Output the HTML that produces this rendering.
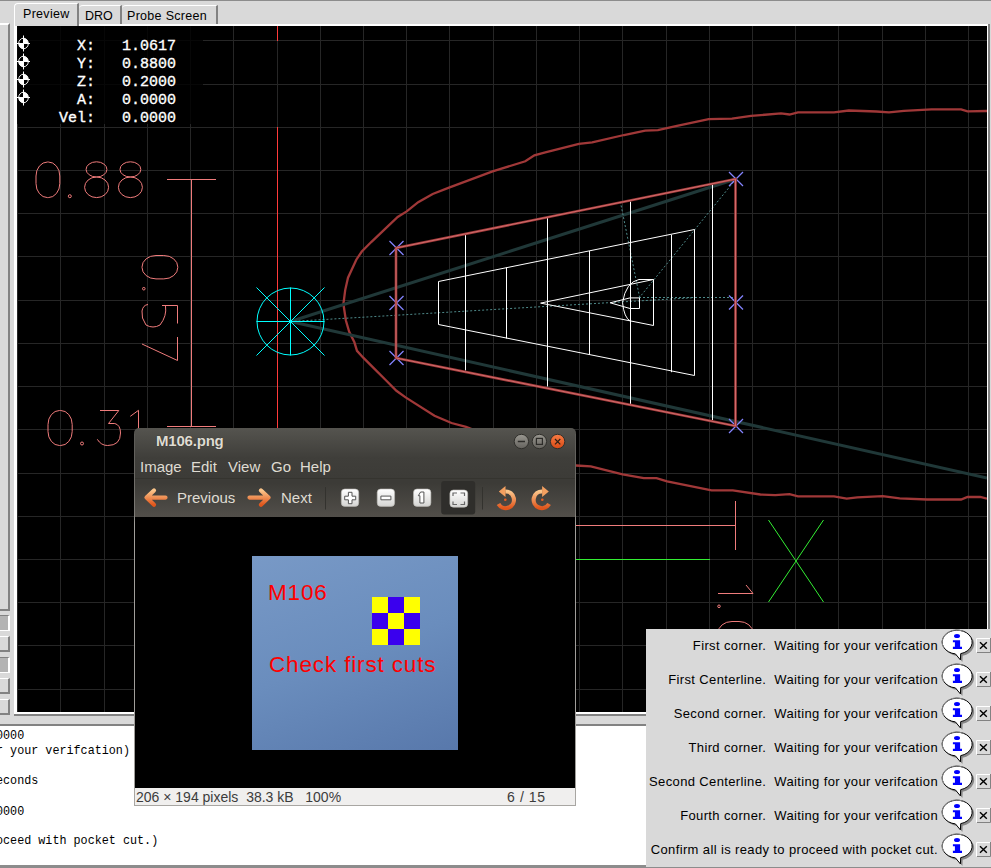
<!DOCTYPE html>
<html><head><meta charset="utf-8">
<style>
*{margin:0;padding:0;box-sizing:border-box}
html,body{width:991px;height:868px;overflow:hidden;background:#d9d9d9;font-family:"Liberation Sans",sans-serif}
.abs{position:absolute}
#topline{left:0;top:0;width:991px;height:1px;background:#8c8c8c}
/* left panel */
#lpanel{left:0;top:23px;width:10px;height:588px;border-top:2px solid #fff;border-right:2px solid #828282;border-bottom:2px solid #828282}
.lbtn{left:0;width:10px;height:16px;background:#d9d9d9;border-top:1px solid #fff;border-right:2px solid #828282;border-bottom:2px solid #828282}
.lbtn.sunk{background:#b3b3b3;border-top:1px solid #828282;border-right:2px solid #fff;border-bottom:1px solid #fff}
/* tabs */
.tab{top:5px;height:20px;background:#d9d9d9;border-left:1px solid #fff;border-top:1px solid #fff;border-right:2px solid #828282;border-top-left-radius:4px;font-size:12.5px;color:#000;padding-left:6px;line-height:21px}
#tab1{left:14px;top:3px;width:65px;height:23px;line-height:21px;padding-left:8px;letter-spacing:0.3px;z-index:2}
#tab2{left:79px;width:43px;padding-left:6px;border-left:none}
#tab3{left:122px;width:96px;padding-left:5px;border-left:none;letter-spacing:0.3px}
/* preview frame */
#frame{left:14px;top:24px;width:976px;height:692px;background:#fff;border-bottom:2px solid #828282;border-right:2px solid #828282}
#black{left:17px;top:26px;width:970px;height:686px;background:#000;overflow:hidden}
#draw{left:0;top:0}
/* dro */
#dro{left:0;top:0;width:186px;height:98px;background:rgba(0,0,0,0.8)}
.dro{font-family:"Liberation Mono",monospace;font-size:15px;-webkit-text-stroke:0.35px #fff;color:#fff;white-space:pre;line-height:18.2px}
/* bottom */
#band{left:0;top:724px;width:991px;height:2px;background:#828282}
#text{left:0;top:726px;width:991px;height:139px;background:#fff}
#bottomline{left:0;top:865px;width:991px;height:3px;background:#8c8c8c}
.mono{font-family:"Liberation Mono",monospace;font-size:11.75px;color:#000;white-space:pre;line-height:15px}
/* eog window */
#eog{left:134px;top:428px;width:442px;height:378px;overflow:hidden;border-radius:5px 5px 0 0}
#eoghead{left:0;top:0;width:442px;height:89px;background:linear-gradient(#55544f 0px,#3f3e3a 30px,#3c3b37 50px,#3c3b37 55px,#524f4a 89px)}
#eogtitle{left:22px;top:4px;font-weight:bold;font-size:15px;letter-spacing:-0.2px;color:#dfdbd2;text-shadow:0 0 1px #26251f}
.menu{top:30px;font-size:15px;color:#dfdbd2}
#eogbody{left:0;top:89px;width:442px;height:271px;background:#000}
#img{left:118px;top:128px;width:206px;height:194px;background:linear-gradient(160deg,#7899c6 0%,#6a8dbd 50%,#5878ab 100%)}
.imgtxt{font-size:22.5px;letter-spacing:0.85px;color:#ff0000;white-space:pre;line-height:26px}
#status{left:0;top:360px;width:442px;height:18px;background:#f0efee;border-left:1px solid #a8a6a2;border-right:1px solid #a8a6a2;border-bottom:1px solid #a8a6a2;font-size:14px;color:#3c3c3c;line-height:17px}
/* notif */
#notif{left:646px;top:629px;width:345px;height:238px;background:#d9d9d9}
.nrow{left:0;width:292px;text-align:right;font-size:13px;letter-spacing:0.37px;color:#000;white-space:pre}
.bubble{left:296px;width:32px;height:34px}
.xbtn{left:330px;width:16px;height:15px;background:#d9d9d9;border-top:1px solid #fff;border-left:1px solid #fff;border-right:1px solid #828282;border-bottom:1px solid #828282;font-size:13px;line-height:12px;text-align:center;color:#000}
</style></head><body>
<div id="topline" class="abs"></div>
<div id="lpanel" class="abs"></div>
<div class="abs lbtn sunk" style="top:615px"></div>
<div class="abs lbtn" style="top:636px"></div>
<div class="abs lbtn sunk" style="top:657px"></div>
<div class="abs lbtn" style="top:678px"></div>
<div class="abs lbtn" style="top:699px"></div>

<div id="tab2" class="abs tab">DRO</div>
<div id="tab3" class="abs tab">Probe Screen</div>
<div id="frame" class="abs"></div>
<div id="tab1" class="abs tab">Preview</div>
<div id="black" class="abs">
<svg id="draw" class="abs" width="970" height="686" viewBox="17 26 970 686">
<line x1="17.5" y1="26" x2="17.5" y2="712" stroke="#262626" stroke-width="1" />
<line x1="60.5" y1="26" x2="60.5" y2="712" stroke="#262626" stroke-width="1" />
<line x1="104.5" y1="26" x2="104.5" y2="712" stroke="#262626" stroke-width="1" />
<line x1="147.5" y1="26" x2="147.5" y2="712" stroke="#262626" stroke-width="1" />
<line x1="190.5" y1="26" x2="190.5" y2="712" stroke="#262626" stroke-width="1" />
<line x1="233.5" y1="26" x2="233.5" y2="712" stroke="#262626" stroke-width="1" />
<line x1="277.5" y1="26" x2="277.5" y2="712" stroke="#262626" stroke-width="1" />
<line x1="320.5" y1="26" x2="320.5" y2="712" stroke="#262626" stroke-width="1" />
<line x1="363.5" y1="26" x2="363.5" y2="712" stroke="#262626" stroke-width="1" />
<line x1="406.5" y1="26" x2="406.5" y2="712" stroke="#262626" stroke-width="1" />
<line x1="449.5" y1="26" x2="449.5" y2="712" stroke="#262626" stroke-width="1" />
<line x1="493.5" y1="26" x2="493.5" y2="712" stroke="#262626" stroke-width="1" />
<line x1="536.5" y1="26" x2="536.5" y2="712" stroke="#262626" stroke-width="1" />
<line x1="579.5" y1="26" x2="579.5" y2="712" stroke="#262626" stroke-width="1" />
<line x1="622.5" y1="26" x2="622.5" y2="712" stroke="#262626" stroke-width="1" />
<line x1="666.5" y1="26" x2="666.5" y2="712" stroke="#262626" stroke-width="1" />
<line x1="709.5" y1="26" x2="709.5" y2="712" stroke="#262626" stroke-width="1" />
<line x1="752.5" y1="26" x2="752.5" y2="712" stroke="#262626" stroke-width="1" />
<line x1="795.5" y1="26" x2="795.5" y2="712" stroke="#262626" stroke-width="1" />
<line x1="838.5" y1="26" x2="838.5" y2="712" stroke="#262626" stroke-width="1" />
<line x1="882.5" y1="26" x2="882.5" y2="712" stroke="#262626" stroke-width="1" />
<line x1="925.5" y1="26" x2="925.5" y2="712" stroke="#262626" stroke-width="1" />
<line x1="968.5" y1="26" x2="968.5" y2="712" stroke="#262626" stroke-width="1" />
<line x1="17" y1="40.5" x2="987" y2="40.5" stroke="#262626" stroke-width="1" />
<line x1="17" y1="84.5" x2="987" y2="84.5" stroke="#262626" stroke-width="1" />
<line x1="17" y1="127.5" x2="987" y2="127.5" stroke="#262626" stroke-width="1" />
<line x1="17" y1="170.5" x2="987" y2="170.5" stroke="#262626" stroke-width="1" />
<line x1="17" y1="213.5" x2="987" y2="213.5" stroke="#262626" stroke-width="1" />
<line x1="17" y1="256.5" x2="987" y2="256.5" stroke="#262626" stroke-width="1" />
<line x1="17" y1="300.5" x2="987" y2="300.5" stroke="#262626" stroke-width="1" />
<line x1="17" y1="343.5" x2="987" y2="343.5" stroke="#262626" stroke-width="1" />
<line x1="17" y1="386.5" x2="987" y2="386.5" stroke="#262626" stroke-width="1" />
<line x1="17" y1="429.5" x2="987" y2="429.5" stroke="#262626" stroke-width="1" />
<line x1="17" y1="473.5" x2="987" y2="473.5" stroke="#262626" stroke-width="1" />
<line x1="17" y1="516.5" x2="987" y2="516.5" stroke="#262626" stroke-width="1" />
<line x1="17" y1="559.5" x2="987" y2="559.5" stroke="#262626" stroke-width="1" />
<line x1="17" y1="602.5" x2="987" y2="602.5" stroke="#262626" stroke-width="1" />
<line x1="17" y1="645.5" x2="987" y2="645.5" stroke="#262626" stroke-width="1" />
<line x1="17" y1="689.5" x2="987" y2="689.5" stroke="#262626" stroke-width="1" />
<polyline fill="none" stroke="#a03838" stroke-width="2.3" points="987,111 967.5,111.3 961.1,109.4 931.5,109.4 903.9,110.9 889,112.4 876.4,111.5 848.8,110.5 834,112.4 798,112.4 789.5,114.5 781,113.4 751.1,115.9 732,118.6 708.7,119.1 677,125.9 657.9,130.1 645.2,130.7 624,135 592.2,142.4 578.9,143.8 545.3,152.3 534.4,155.3 525.3,161.3 492.6,171.3 449,187.7 432.7,194 418.2,202.2 406.7,211.4 397.7,216.9 382.5,231.4 371.5,241.8 361.8,251.5 356.3,259.7 348,277.7 345.2,290.1 343.4,304 345.9,320.5 349.2,331.8 354.4,342.3 357,350.8 363,357.4 371.5,365.9 385.9,380.3 396.4,390.8 405.6,397.4 434.5,415.8 451.5,423 466,426.9 500,440 576,465.5 590.8,466.3 622.6,474.4 643.8,478.2 656.5,478.2 667.1,481.4 711.6,490.3 732.8,490.3 760.4,494.5 775.2,495.1 789.5,494.2 798,496.3 834,496.3 846.7,498.6 857.3,497.4 882.7,496.1 899.7,498.4 927.2,499.5 961.1,499.5 967.5,497 980.2,497 987,498.6"/>
<line x1="290.5" y1="321.5" x2="736" y2="179" stroke="#203838" stroke-width="3" />
<line x1="290.5" y1="321.5" x2="987" y2="478" stroke="#203838" stroke-width="3" />
<line x1="290.5" y1="321.5" x2="695" y2="297.6" stroke="#4f8a8a" stroke-width="1" stroke-dasharray="2,2"/>
<line x1="639" y1="297.5" x2="735.5" y2="297.5" stroke="#4f8a8a" stroke-width="1" stroke-dasharray="2,2"/>
<line x1="620.3" y1="201.5" x2="639.6" y2="297.3" stroke="#4f8a8a" stroke-width="1" stroke-dasharray="2,2"/>
<line x1="736" y1="179" x2="639.6" y2="297.3" stroke="#4f8a8a" stroke-width="1" stroke-dasharray="2,2"/>
<polygon fill="none" stroke="#ffffff" stroke-width="1" points="438.5,281.5 694.5,229.5 694.5,375.5 438.5,324.5"/>
<line x1="465.5" y1="234.5" x2="465.5" y2="370.5" stroke="#ffffff" stroke-width="1" />
<line x1="506.5" y1="267.5" x2="506.5" y2="338.5" stroke="#ffffff" stroke-width="1" />
<line x1="547.5" y1="218" x2="547.5" y2="386.5" stroke="#ffffff" stroke-width="1" />
<line x1="589.5" y1="251" x2="589.5" y2="355" stroke="#ffffff" stroke-width="1" />
<line x1="630.5" y1="201.5" x2="630.5" y2="404" stroke="#ffffff" stroke-width="1" />
<line x1="671.5" y1="234.7" x2="671.5" y2="372.2" stroke="#ffffff" stroke-width="1" />
<line x1="712.5" y1="184" x2="712.5" y2="420" stroke="#ffffff" stroke-width="1" />
<polyline fill="none" stroke="#ffffff" stroke-width="1" points="639,279.5 653.5,279.5 653.5,325.5 540.6,303.1 653.5,279.5"/>
<path fill="none" stroke="#ffffff" stroke-width="1" d="M639,279.5 Q626,282 622.5,302.4 Q624,318 630.6,321.3"/>
<polyline fill="none" stroke="#ffffff" stroke-width="1" points="610.2,302.8 630,297.9 639.5,297.9 639.5,308.5 630,308.5 610.2,302.8"/>
<line x1="389.5" y1="241" x2="403.5" y2="255" stroke="#8484ff" stroke-width="1.2" />
<line x1="389.5" y1="255" x2="403.5" y2="241" stroke="#8484ff" stroke-width="1.2" />
<line x1="389.5" y1="296" x2="403.5" y2="310" stroke="#8484ff" stroke-width="1.2" />
<line x1="389.5" y1="310" x2="403.5" y2="296" stroke="#8484ff" stroke-width="1.2" />
<line x1="389.5" y1="351" x2="403.5" y2="365" stroke="#8484ff" stroke-width="1.2" />
<line x1="389.5" y1="365" x2="403.5" y2="351" stroke="#8484ff" stroke-width="1.2" />
<line x1="729" y1="172" x2="743" y2="186" stroke="#8484ff" stroke-width="1.2" />
<line x1="729" y1="186" x2="743" y2="172" stroke="#8484ff" stroke-width="1.2" />
<line x1="729" y1="295.5" x2="743" y2="309.5" stroke="#8484ff" stroke-width="1.2" />
<line x1="729" y1="309.5" x2="743" y2="295.5" stroke="#8484ff" stroke-width="1.2" />
<line x1="729" y1="419" x2="743" y2="433" stroke="#8484ff" stroke-width="1.2" />
<line x1="729" y1="433" x2="743" y2="419" stroke="#8484ff" stroke-width="1.2" />
<polygon fill="none" stroke="#a03a3a" stroke-width="2.6" points="396,248 735.5,179 735.5,426 396,358"/>
<polygon fill="none" stroke="#d06c6c" stroke-width="1" points="396,248 735.5,179 735.5,426 396,358"/>
<line x1="277.5" y1="26" x2="277.5" y2="41" stroke="#ff3a3a" stroke-width="1" />
<line x1="277.5" y1="127" x2="277.5" y2="712" stroke="#ff3a3a" stroke-width="1" />
<circle cx="290.5" cy="321.5" r="33.5" fill="none" stroke="#00ffff" stroke-width="1"/>
<line x1="256.5" y1="321.5" x2="324.5" y2="321.5" stroke="#00ffff" stroke-width="1" />
<line x1="290.5" y1="287.5" x2="290.5" y2="355.5" stroke="#00ffff" stroke-width="1" />
<line x1="256.5" y1="287.5" x2="324.5" y2="355.5" stroke="#00ffff" stroke-width="1" />
<line x1="256.5" y1="355.5" x2="324.5" y2="287.5" stroke="#00ffff" stroke-width="1" />
<line x1="167" y1="179.5" x2="216" y2="179.5" stroke="#f07c7c" stroke-width="1" />
<line x1="191.5" y1="179.5" x2="191.5" y2="426.5" stroke="#f07c7c" stroke-width="1" />
<line x1="167" y1="426.5" x2="216" y2="426.5" stroke="#f07c7c" stroke-width="1" />
<line x1="575" y1="525.5" x2="735.5" y2="525.5" stroke="#f07c7c" stroke-width="1" />
<line x1="735.5" y1="501" x2="735.5" y2="550" stroke="#f07c7c" stroke-width="1" />
<g fill="none" stroke="#f07c7c" stroke-width="1"><rect x="36" y="162" width="23.8" height="35.6" rx="11.5" ry="14"/><circle cx="69.8" cy="196.2" r="1.5"/><ellipse cx="96.5" cy="169.4" rx="10.4" ry="7.6"/><ellipse cx="96.6" cy="187.3" rx="12" ry="10.3"/><ellipse cx="130.4" cy="169.4" rx="10.4" ry="7.6"/><ellipse cx="130.4" cy="187.3" rx="12" ry="10.3"/></g>
<g fill="none" stroke="#f07c7c" stroke-width="1"><rect x="48" y="410.5" width="24.2" height="35" rx="11.5" ry="14"/><circle cx="82" cy="443.5" r="1.5"/><path d="M100,410.5 L118.8,410.5 L108.5,423.5 L114.8,423.5 Q120.5,425 120.5,433 Q120.5,445.5 107.6,445.5 Q101,445.5 97.3,439.3"/><path d="M130.3,416.3 L138.5,410.3 L138.5,446"/></g>
<g fill="none" stroke="#f07c7c" stroke-width="1"><rect x="142" y="255.5" width="35.8" height="23.4" rx="14" ry="11.5"/><circle cx="143.8" cy="288.7" r="1.3"/><path d="M162,305.5 L177.5,305.5 L177.5,323.5"/><path d="M165.5,306 Q167,316 160,325 Q153,329 146,325 Q141,318 142,311 Q143,305 148,304.5"/><path d="M177.5,337 L177.5,360.5 L142,344"/></g>
<g fill="none" stroke="#f07c7c" stroke-width="1"><path d="M718,593.5 L753,593.5 L746,585"/><circle cx="719" cy="606.3" r="1.3"/><rect x="718" y="621.5" width="35" height="24" rx="14" ry="11.5"/></g>
<line x1="575" y1="559.5" x2="710" y2="559.5" stroke="#33ee33" stroke-width="1" />
<line x1="768.5" y1="520" x2="823.5" y2="602" stroke="#33ee33" stroke-width="1" />
<line x1="823.5" y1="520" x2="768.5" y2="602" stroke="#33ee33" stroke-width="1" />
</svg>
<div id="dro" class="abs"></div>
<svg class="abs" style="left:0;top:0" width="20" height="100" viewBox="17 26 20 100">
<g id="hm"><ellipse cx="23.5" cy="43.5" rx="4.8" ry="5.3" fill="#000" stroke="#fff" stroke-width="1"/><path d="M23.5,43.5 L23.5,38.2 A4.8,5.3 0 0 1 28.3,43.5 Z M23.5,43.5 L23.5,48.8 A4.8,5.3 0 0 1 18.7,43.5 Z" fill="#fff"/><path d="M16.5,43.5 H30 M23.5,35.5 V51.5" stroke="#fff" stroke-width="1"/></g>
<use href="#hm" y="18"/><use href="#hm" y="36"/><use href="#hm" y="54"/>
</svg>
<div class="abs dro" style="left:33px;top:11.5px;line-height:18.1px">   X:   1.0617
   Y:   0.8800
   Z:   0.2000
   A:   0.0000
 Vel:   0.0000</div>
</div>

<div id="band" class="abs"></div>
<div id="text" class="abs">
<div class="abs mono" style="left:-4px;top:3px;line-height:13.16px;transform:scaleY(1.14);transform-origin:0 0">0000
r your verifcation)

econds

0000

oceed with pocket cut.)</div>
</div>
<div id="bottomline" class="abs"></div>

<div id="eog" class="abs">
 <div id="eoghead" class="abs"></div>
 <div id="eogtitle" class="abs">M106.png</div>
 <div class="abs menu" style="left:6px">Image</div>
 <div class="abs menu" style="left:57px">Edit</div>
 <div class="abs menu" style="left:94px">View</div>
 <div class="abs menu" style="left:137px">Go</div>
 <div class="abs menu" style="left:166px">Help</div>
 <div class="abs" style="left:0;top:50px;width:442px;height:1px;background:#35342f"></div>
 <div class="abs menu" style="left:43px;top:61px">Previous</div>
 <div class="abs menu" style="left:147px;top:61px">Next</div>
 <svg class="abs" style="left:0;top:0" width="442" height="89" viewBox="134 428 442 89">
  <defs>
   <linearGradient id="gbtn" x1="0" y1="0" x2="0" y2="1"><stop offset="0" stop-color="#9a9891"/><stop offset="1" stop-color="#64625d"/></linearGradient>
   <linearGradient id="gcls" x1="0" y1="0" x2="0" y2="1"><stop offset="0" stop-color="#f77c45"/><stop offset="1" stop-color="#d94a15"/></linearGradient>
   <linearGradient id="garr" x1="0" y1="0" x2="0" y2="1"><stop offset="0" stop-color="#fbc58a"/><stop offset="1" stop-color="#e0561c"/></linearGradient>
   <linearGradient id="gico" x1="0" y1="0" x2="0" y2="1"><stop offset="0" stop-color="#ffffff"/><stop offset="1" stop-color="#d5d5d3"/></linearGradient>
  </defs>
  <circle cx="521.4" cy="441.5" r="7.2" fill="url(#gbtn)" stroke="#302f2b" stroke-width="1"/>
  <path d="M517.8,441.5 H525" stroke="#2d2c29" stroke-width="1.3"/>
  <circle cx="539.4" cy="441.5" r="7.2" fill="url(#gbtn)" stroke="#302f2b" stroke-width="1"/>
  <rect x="536.4" y="438.4" width="6" height="6" fill="none" stroke="#2d2c29" stroke-width="1.2"/>
  <circle cx="557.6" cy="441.5" r="7.2" fill="url(#gcls)" stroke="#302f2b" stroke-width="1"/>
  <path d="M555,439 L560.3,444.3 M560.3,439 L555,444.3" stroke="#2d2016" stroke-width="1.2"/>
  <g fill="none" stroke="url(#garr)" stroke-width="4.2" stroke-linecap="round" stroke-linejoin="round">
   <path d="M165.5,497.6 H147 M154,490.5 L146.5,497.6 L154,504.8"/>
   <path d="M249.5,497.6 H268 M261,490.5 L268.5,497.6 L261,504.8"/>
  </g>
  <path d="M325.5,487 V509.5 M482.5,487 V509.5" stroke="#33322e" stroke-width="1"/>
  <rect x="441.2" y="481" width="34" height="33.6" rx="3" fill="#2f2e2b"/>
  <g fill="url(#gico)" stroke="#b8b7b2" stroke-width="0.6">
   <rect x="341.3" y="489" width="17.4" height="17.4" rx="3.5"/>
   <rect x="377.2" y="489" width="17.4" height="17.4" rx="3.5"/>
   <rect x="413.5" y="489" width="17.4" height="17.4" rx="3.5"/>
   <rect x="449.9" y="490" width="17.8" height="17.2" rx="3.5"/>
  </g>
  <g fill="#fff" stroke="#555" stroke-width="1">
   <path d="M348.4,492.3 h3.6 v3.9 h3.7 v3.6 h-3.7 v3.9 h-3.6 v-3.9 h-3.7 v-3.6 h3.7 z"/>
   <path d="M380.9,496.1 h10 v3.7 h-10 z"/>
   <path d="M420.6,492 h3.3 v11 h-4 v-7.3 h-1.6 z"/>
  </g>
  <g fill="none" stroke="#666" stroke-width="1.2">
   <path d="M453,496 v-3 h4 M464.5,496 v-3 h-4 M453,501.5 v3 h4 M464.5,501.5 v3 h-4"/>
  </g>
  <g fill="none" stroke="url(#garr)" stroke-width="4.2" stroke-linecap="butt">
   <path d="M505.3,491.5 A8.3,8.3 0 1 1 498.5,504"/>
   <path d="M542.3,491.5 A8.3,8.3 0 1 0 549.1,504"/>
  </g>
  <path d="M498.8,491.5 L505.5,486 L505.5,497 Z" fill="#f4a060"/>
  <path d="M548.8,491.5 L542.1,486 L542.1,497 Z" fill="#f4a060"/>
  <circle cx="505.3" cy="499.8" r="1.3" fill="#e85a20"/>
  <circle cx="542.3" cy="499.8" r="1.3" fill="#e85a20"/>
 </svg>
 <div id="eogbody" class="abs"></div>
 <div id="img" class="abs">
  <div class="abs imgtxt" style="left:16px;top:23.5px">M106</div>
  <div class="abs imgtxt" style="left:17px;top:96px">Check first cuts</div>
  <svg class="abs" style="left:120px;top:41px" width="48" height="48" viewBox="0 0 48 48">
   <rect width="48" height="48" fill="#ffff00"/>
   <rect x="16" y="0" width="16" height="16" fill="#3a00ee"/>
   <rect x="0" y="16" width="16" height="16" fill="#3a00ee"/>
   <rect x="32" y="16" width="16" height="16" fill="#3a00ee"/>
   <rect x="16" y="32" width="16" height="16" fill="#3a00ee"/>
  </svg>
 </div>
 <div class="abs" style="left:0;top:6px;width:1px;height:372px;background:linear-gradient(#5a5955,#7d7b76 80px,#a09e9a 89px,#a09e9a)"></div>
 <div class="abs" style="left:441px;top:6px;width:1px;height:372px;background:linear-gradient(#5a5955,#7d7b76 80px,#a09e9a 89px,#a09e9a)"></div>
 <div id="status" class="abs" style="padding-left:1px;padding-top:1px">206 × 194 pixels&nbsp; 38.3 kB &nbsp; 100%<span class="abs" style="left:372px;top:1px;letter-spacing:0.6px">6 / 15</span></div>
</div>

<div id="notif" class="abs">
<svg class="abs" style="left:0;top:0" width="345" height="239" viewBox="646 629 345 239">
<defs><g id="bub"><path d="M957.4,655.9 A15,11.9 0 1 1 962.7,655.65 L962.4,661.9 Z" fill="#868686"/><path d="M955.4,653.9 A15,11.9 0 1 1 960.7,653.65 L960.4,659.9 Z" fill="#fff" stroke="#000" stroke-width="1"/><path d="M944.1,648.05 A15,11.9 0 0 1 962.2,630.9" fill="none" stroke="#8a8a8a" stroke-width="1.05"/><ellipse cx="957" cy="636" rx="3" ry="2.1" fill="#0000ff"/><path d="M952.9,640.2 H960.1 V646.7 H962 V648.9 H952.9 V646.7 H954.9 V642.3 H952.9 Z" fill="#0000ff"/><rect x="976.5" y="638" width="16" height="15" fill="#d9d9d9"/><path d="M976.5,652.5 V638.5 H991" fill="none" stroke="#fff" stroke-width="1"/><path d="M977,652.5 H990.5 V638" fill="none" stroke="#828282" stroke-width="1"/><path d="M980,642.2 L986.8,648.8 M986.8,642.2 L980,648.8" stroke="#000" stroke-width="1.4"/></g></defs>
<use href="#bub" y="0"/>
<use href="#bub" y="34"/>
<use href="#bub" y="68"/>
<use href="#bub" y="102"/>
<use href="#bub" y="136"/>
<use href="#bub" y="170"/>
<use href="#bub" y="204"/>
</svg>
<div class="abs nrow" style="top:9px">First corner.  Waiting for your verifcation</div>
<div class="abs nrow" style="top:43px">First Centerline.  Waiting for your verifcation</div>
<div class="abs nrow" style="top:77px">Second corner.  Waiting for your verifcation</div>
<div class="abs nrow" style="top:111px">Third corner.  Waiting for your verifcation</div>
<div class="abs nrow" style="top:145px">Second Centerline.  Waiting for your verifcation</div>
<div class="abs nrow" style="top:179px">Fourth corner.  Waiting for your verifcation</div>
<div class="abs nrow" style="top:213px">Confirm all is ready to proceed with pocket cut.</div>
</div>
</body></html>
